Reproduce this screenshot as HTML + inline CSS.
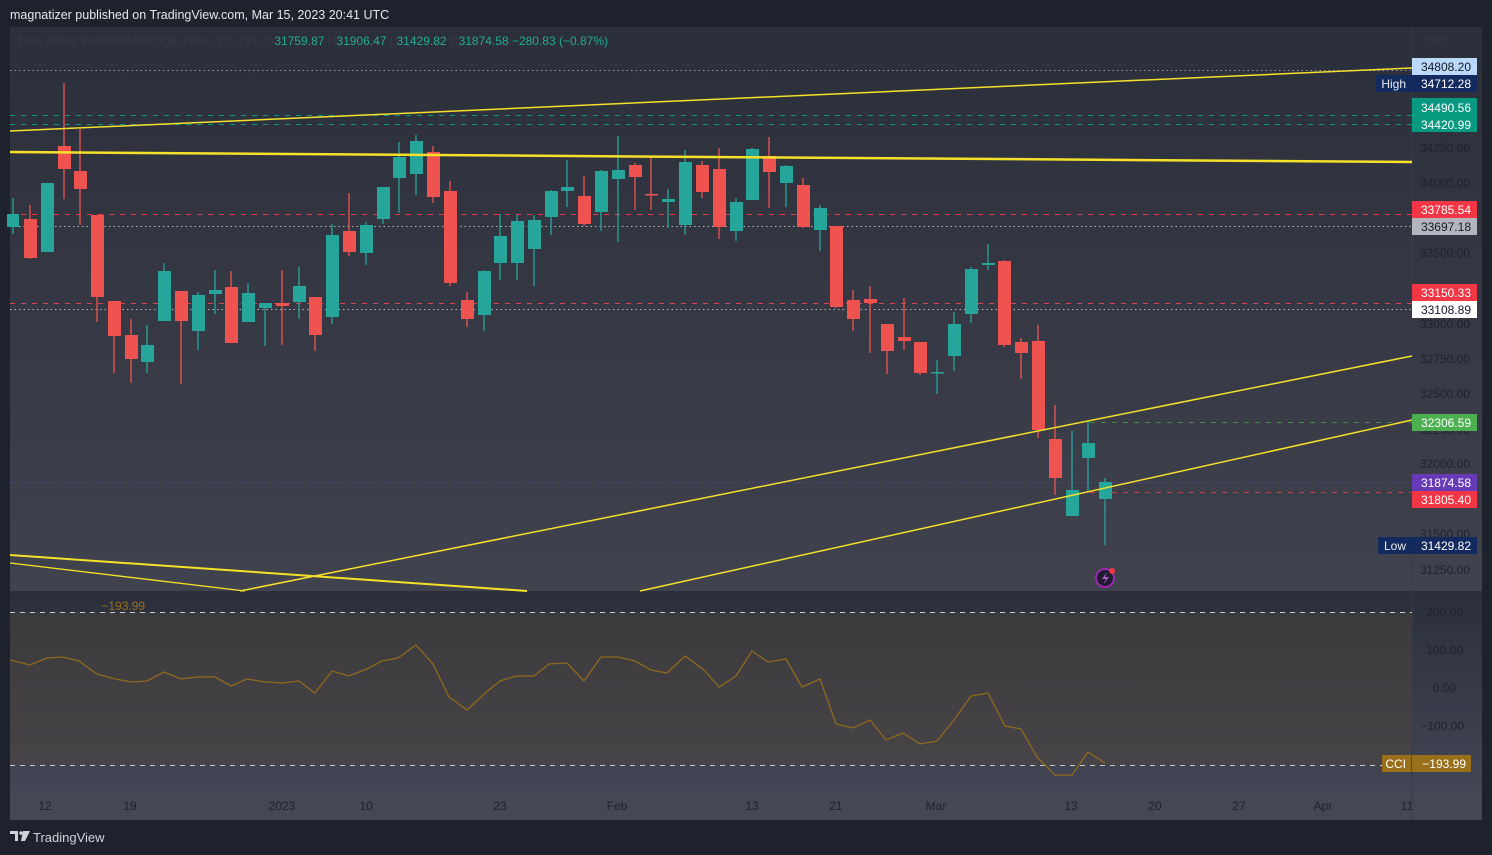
<!DOCTYPE html>
<html><head><meta charset="utf-8"><style>
html,body{margin:0;padding:0;background:#1e222d;width:1492px;height:855px;overflow:hidden;font-family:"Liberation Sans",sans-serif}
svg{display:block}
</style></head><body>
<svg width="1492" height="855" viewBox="0 0 1492 855" xmlns="http://www.w3.org/2000/svg" font-family="Liberation Sans, sans-serif">
<defs>
<linearGradient id="gp" x1="0" y1="0" x2="0" y2="1"><stop offset="0" stop-color="#2b2f3a"/><stop offset="1" stop-color="#40424e"/></linearGradient>
<linearGradient id="gc" x1="0" y1="0" x2="0" y2="1"><stop offset="0" stop-color="#2b2f3b"/><stop offset="1" stop-color="#434654"/></linearGradient>
<linearGradient id="gf" x1="0" y1="0" x2="0" y2="1"><stop offset="0" stop-color="#3b3a3c"/><stop offset="1" stop-color="#474448"/></linearGradient>
</defs>
<rect width="1492" height="855" fill="#1e222d"/>
<text x="10" y="19" font-size="12.5" fill="#e6e7ea">magnatizer published on TradingView.com, Mar 15, 2023 20:41 UTC</text>
<rect x="10" y="27" width="1472" height="564" fill="url(#gp)"/>
<rect x="10" y="591" width="1472" height="202" fill="url(#gc)"/>
<rect x="10" y="793" width="1472" height="27" fill="#444754"/>
<rect x="10" y="612" width="1402" height="153" fill="url(#gf)"/>
<line x1="1412" y1="27" x2="1412" y2="820" stroke="#3a3d49" stroke-width="1"/>
<text x="18" y="45" font-size="12" fill="#363a46">Dow Jones Industrial Average Index, 1D, TVC  O<tspan fill="#22ab94">31759.87</tspan>  H<tspan fill="#22ab94">31906.47</tspan>  L<tspan fill="#22ab94">31429.82</tspan>  C<tspan fill="#22ab94">31874.58  −280.83 (−0.87%)</tspan></text>
<text x="1423" y="45" font-size="11" fill="#363a46">USD</text>
<g stroke-width="1" fill="none">
<line x1="10" y1="70.5" x2="1412" y2="70.5" stroke="#9598a1" stroke-dasharray="1.5 3"/>
<line x1="10" y1="115.5" x2="1412" y2="115.5" stroke="#089981" stroke-dasharray="5 6"/>
<line x1="10" y1="124.5" x2="1412" y2="124.5" stroke="#089981" stroke-dasharray="5 6"/>
<line x1="10" y1="214.5" x2="1412" y2="214.5" stroke="#f23645" stroke-dasharray="5 6"/>
<line x1="10" y1="226.5" x2="1412" y2="226.5" stroke="#b2b5be" stroke-dasharray="1.5 3"/>
<line x1="10" y1="303.5" x2="1412" y2="303.5" stroke="#d9424f" stroke-dasharray="5 6"/>
<line x1="10" y1="309.5" x2="1412" y2="309.5" stroke="#b2b5be" stroke-dasharray="1.5 3"/>
<line x1="1090" y1="422.5" x2="1412" y2="422.5" stroke="#3f8a45" stroke-dasharray="5 6"/>
<line x1="10" y1="482.5" x2="1412" y2="482.5" stroke="#5a45a8" stroke-dasharray="1.5 3"/>
<line x1="1090" y1="492.5" x2="1412" y2="492.5" stroke="#c8404c" stroke-dasharray="5 6"/>
<line x1="10" y1="612.5" x2="1412" y2="612.5" stroke="#c8c9cc" stroke-dasharray="5 5"/>
<line x1="10" y1="765.5" x2="1412" y2="765.5" stroke="#c8c9cc" stroke-dasharray="5 5"/>
</g>
<g fill="#26a69a" stroke="#26a69a" stroke-width="1.3">
<line x1="13" y1="198" x2="13" y2="234"/><rect x="7" y="214" width="12" height="13" stroke="none"/>
<rect x="41" y="183" width="13" height="69" stroke="none"/>
<line x1="147" y1="325" x2="147" y2="373"/><rect x="141" y="345" width="13" height="17" stroke="none"/>
<line x1="164" y1="263" x2="164" y2="321"/><rect x="158" y="271" width="13" height="50" stroke="none"/>
<line x1="198" y1="292" x2="198" y2="350"/><rect x="192" y="295" width="13" height="36" stroke="none"/>
<line x1="215" y1="270" x2="215" y2="314"/><rect x="209" y="290" width="13" height="4" stroke="none"/>
<line x1="248" y1="283" x2="248" y2="322"/><rect x="242" y="293" width="13" height="29" stroke="none"/>
<line x1="265" y1="303" x2="265" y2="346"/><rect x="259" y="303" width="13" height="5" stroke="none"/>
<line x1="299" y1="267" x2="299" y2="319"/><rect x="293" y="286" width="13" height="16" stroke="none"/>
<line x1="332" y1="224" x2="332" y2="324"/><rect x="326" y="235" width="13" height="82" stroke="none"/>
<line x1="366" y1="222" x2="366" y2="265"/><rect x="360" y="225" width="13" height="28" stroke="none"/>
<line x1="383" y1="187" x2="383" y2="224"/><rect x="377" y="187" width="13" height="32" stroke="none"/>
<line x1="399" y1="142" x2="399" y2="213"/><rect x="393" y="157" width="13" height="21" stroke="none"/>
<line x1="416" y1="135" x2="416" y2="195"/><rect x="410" y="141" width="13" height="33" stroke="none"/>
<line x1="484" y1="270" x2="484" y2="331"/><rect x="478" y="271" width="13" height="44" stroke="none"/>
<line x1="500" y1="214" x2="500" y2="280"/><rect x="494" y="236" width="13" height="27" stroke="none"/>
<line x1="517" y1="215" x2="517" y2="280"/><rect x="511" y="221" width="13" height="42" stroke="none"/>
<line x1="534" y1="215" x2="534" y2="286"/><rect x="528" y="220" width="13" height="29" stroke="none"/>
<line x1="551" y1="190" x2="551" y2="235"/><rect x="545" y="191" width="13" height="26" stroke="none"/>
<line x1="567" y1="160" x2="567" y2="207"/><rect x="561" y="187" width="13" height="4" stroke="none"/>
<line x1="601" y1="170" x2="601" y2="231"/><rect x="595" y="171" width="13" height="41" stroke="none"/>
<line x1="618" y1="136" x2="618" y2="242"/><rect x="612" y="170" width="13" height="9" stroke="none"/>
<line x1="668" y1="189" x2="668" y2="228"/><rect x="662" y="199" width="13" height="3" stroke="none"/>
<line x1="685" y1="150" x2="685" y2="235"/><rect x="679" y="162" width="13" height="63" stroke="none"/>
<line x1="736" y1="198" x2="736" y2="241"/><rect x="730" y="202" width="13" height="29" stroke="none"/>
<line x1="752" y1="148" x2="752" y2="200"/><rect x="746" y="149" width="13" height="51" stroke="none"/>
<line x1="786" y1="165" x2="786" y2="207"/><rect x="780" y="166" width="13" height="17" stroke="none"/>
<line x1="820" y1="205" x2="820" y2="251"/><rect x="814" y="208" width="13" height="22" stroke="none"/>
<line x1="937" y1="360" x2="937" y2="394"/><rect x="931" y="372" width="13" height="1.5" stroke="none"/>
<line x1="954" y1="312" x2="954" y2="371"/><rect x="948" y="324" width="13" height="32" stroke="none"/>
<line x1="971" y1="267" x2="971" y2="323"/><rect x="965" y="269" width="13" height="45" stroke="none"/>
<line x1="988" y1="244" x2="988" y2="270"/><rect x="982" y="263" width="13" height="2" stroke="none"/>
<line x1="1072" y1="431" x2="1072" y2="516"/><rect x="1066" y="490" width="13" height="26" stroke="none"/>
<line x1="1088" y1="421" x2="1088" y2="492"/><rect x="1082" y="443" width="13" height="15" stroke="none"/>
<line x1="1105" y1="478" x2="1105" y2="545"/><rect x="1099" y="482" width="13" height="17" stroke="none"/>
</g>
<g fill="#ef5350" stroke="#ef5350" stroke-width="1.3">
<line x1="30" y1="205" x2="30" y2="259"/><rect x="24" y="219" width="13" height="39" stroke="none"/>
<line x1="64" y1="83" x2="64" y2="199"/><rect x="58" y="146" width="13" height="23" stroke="none"/>
<line x1="80" y1="129" x2="80" y2="225"/><rect x="74" y="171" width="13" height="18" stroke="none"/>
<line x1="97" y1="215" x2="97" y2="322"/><rect x="91" y="215" width="13" height="82" stroke="none"/>
<line x1="114" y1="301" x2="114" y2="373"/><rect x="108" y="301" width="13" height="35" stroke="none"/>
<line x1="131" y1="319" x2="131" y2="383"/><rect x="125" y="335" width="13" height="24" stroke="none"/>
<line x1="181" y1="291" x2="181" y2="384"/><rect x="175" y="291" width="13" height="30" stroke="none"/>
<line x1="231" y1="271" x2="231" y2="343"/><rect x="225" y="287" width="13" height="56" stroke="none"/>
<line x1="282" y1="270" x2="282" y2="345"/><rect x="276" y="303" width="13" height="3" stroke="none"/>
<line x1="315" y1="297" x2="315" y2="351"/><rect x="309" y="297" width="13" height="38" stroke="none"/>
<line x1="349" y1="193" x2="349" y2="256"/><rect x="343" y="231" width="13" height="21" stroke="none"/>
<line x1="433" y1="146" x2="433" y2="203"/><rect x="427" y="152" width="13" height="45" stroke="none"/>
<line x1="450" y1="181" x2="450" y2="286"/><rect x="444" y="191" width="13" height="92" stroke="none"/>
<line x1="467" y1="292" x2="467" y2="327"/><rect x="461" y="300" width="13" height="19" stroke="none"/>
<line x1="584" y1="176" x2="584" y2="226"/><rect x="578" y="196" width="13" height="28" stroke="none"/>
<line x1="635" y1="163" x2="635" y2="210"/><rect x="629" y="165" width="13" height="12" stroke="none"/>
<line x1="651" y1="157" x2="651" y2="210"/><rect x="645" y="194" width="13" height="1.5" stroke="none"/>
<line x1="702" y1="161" x2="702" y2="198"/><rect x="696" y="165" width="13" height="27" stroke="none"/>
<line x1="719" y1="148" x2="719" y2="239"/><rect x="713" y="169" width="13" height="58" stroke="none"/>
<line x1="769" y1="137" x2="769" y2="208"/><rect x="763" y="156" width="13" height="16" stroke="none"/>
<line x1="803" y1="178" x2="803" y2="228"/><rect x="797" y="185" width="13" height="42" stroke="none"/>
<line x1="836" y1="226" x2="836" y2="308"/><rect x="830" y="226" width="13" height="81" stroke="none"/>
<line x1="853" y1="290" x2="853" y2="331"/><rect x="847" y="300" width="13" height="19" stroke="none"/>
<line x1="870" y1="286" x2="870" y2="353"/><rect x="864" y="299" width="13" height="4" stroke="none"/>
<line x1="887" y1="324" x2="887" y2="374"/><rect x="881" y="324" width="13" height="27" stroke="none"/>
<line x1="904" y1="298" x2="904" y2="350"/><rect x="898" y="337" width="13" height="4" stroke="none"/>
<line x1="920" y1="342" x2="920" y2="375"/><rect x="914" y="342" width="13" height="31" stroke="none"/>
<line x1="1004" y1="260" x2="1004" y2="347"/><rect x="998" y="261" width="13" height="84" stroke="none"/>
<line x1="1021" y1="338" x2="1021" y2="379"/><rect x="1015" y="342" width="13" height="11" stroke="none"/>
<line x1="1038" y1="325" x2="1038" y2="438"/><rect x="1032" y="341" width="13" height="89" stroke="none"/>
<line x1="1055" y1="405" x2="1055" y2="495"/><rect x="1049" y="439" width="13" height="39" stroke="none"/>
</g>
<g stroke="#f5e12a" fill="none">
<line x1="10" y1="131" x2="1412" y2="68" stroke-width="1.5"/>
<line x1="10" y1="152" x2="1412" y2="162" stroke-width="2.5"/>
<line x1="240" y1="591" x2="1412" y2="356" stroke-width="1.5"/>
<line x1="640" y1="591" x2="1412" y2="420" stroke-width="1.5"/>
<line x1="10" y1="555" x2="527" y2="591" stroke-width="2"/>
<line x1="10" y1="563" x2="245" y2="591" stroke-width="1.3"/>
</g>
<circle cx="1105" cy="578" r="9" fill="#1e1b2e" stroke="#9c27b0" stroke-width="2"/>
<path d="M1107 572 L1102 579 L1106 579 L1103 585 L1109 577 L1105 577 Z" fill="#b45fd0"/>
<circle cx="1112" cy="571" r="3" fill="#f23645"/>
<polyline fill="none" stroke="#8f6a1c" stroke-width="1.3" points="10,660 30,665 47,658 63,657 79,661 97,674 115,679 132,682 147,681 164,672 181,679 197,677 215,677 231,686 247,679 265,682 283,683 299,681 315,693 332,671 349,676 367,669 382,661 398,658 416,645 433,664 449,697 467,710 484,694 500,681 516,676 534,676 549,664 567,663 584,681 601,657 618,657 635,661 651,670 667,673 685,656 704,670 719,687 736,676 752,651 768,662 786,659 802,687 820,679 836,724 853,728 870,720 886,740 903,733 920,744 937,741 954,720 971,696 988,693 1005,726 1021,729 1037,757 1055,775 1072,775 1088,752 1105,763"/>
<text x="18" y="610" font-size="12" fill="#30343f">CCI (55, close)  <tspan fill="#9a6f1a">−193.99</tspan></text>
<g font-size="12" fill="#1f222b" text-anchor="end">
<text x="1470" y="152">34250.00</text>
<text x="1470" y="187">34000.00</text>
<text x="1470" y="257">33500.00</text>
<text x="1470" y="328">33000.00</text>
<text x="1470" y="363">32750.00</text>
<text x="1470" y="398">32500.00</text>
<text x="1470" y="434">32250.00</text>
<text x="1470" y="468">32000.00</text>
<text x="1470" y="538">31500.00</text>
<text x="1470" y="574">31250.00</text>
<text x="1463" y="616">200.00</text>
<text x="1463" y="654">100.00</text>
<text x="1456" y="692">0.00</text>
<text x="1464" y="730">−100.00</text>
</g>
<g font-size="12" text-anchor="end">
<rect x="1412" y="58" width="65" height="17" fill="#bbd9fb"/><text x="1471" y="71" fill="#131722">34808.20</text>
<rect x="1376" y="75" width="101" height="17" fill="#132a5e"/><text x="1406" y="88" fill="#e8eaf0">High</text><text x="1471" y="88" fill="#fff">34712.28</text>
<rect x="1412" y="98" width="65" height="34" fill="#089981"/><text x="1471" y="112" fill="#fff">34490.56</text><text x="1471" y="129" fill="#fff">34420.99</text>
<rect x="1412" y="201" width="65" height="17" fill="#f23645"/><text x="1471" y="214" fill="#fff">33785.54</text>
<rect x="1412" y="218" width="65" height="17" fill="#b2b5be"/><text x="1471" y="231" fill="#131722">33697.18</text>
<rect x="1412" y="284" width="65" height="17" fill="#f23645"/><text x="1471" y="297" fill="#fff">33150.33</text>
<rect x="1412" y="301" width="65" height="17" fill="#ffffff"/><text x="1471" y="314" fill="#131722">33108.89</text>
<rect x="1412" y="414" width="65" height="17" fill="#4caf50"/><text x="1471" y="427" fill="#fff">32306.59</text>
<rect x="1412" y="474" width="65" height="17" fill="#673ab7"/><text x="1471" y="487" fill="#fff">31874.58</text>
<rect x="1412" y="491" width="65" height="17" fill="#f23645"/><text x="1471" y="504" fill="#fff">31805.40</text>
<rect x="1378" y="537" width="99" height="17" fill="#132a5e"/><text x="1406" y="550" fill="#e8eaf0">Low</text><text x="1471" y="550" fill="#fff">31429.82</text>
<rect x="1382" y="755" width="89" height="17" fill="#9a6f1a"/><line x1="1411.5" y1="755" x2="1411.5" y2="772" stroke="#444754"/><text x="1406" y="768" fill="#fff">CCI</text><text x="1466" y="768" fill="#fff">−193.99</text>
</g>
<g font-size="12" fill="#1f222b" text-anchor="middle">
<text x="45" y="810">12</text><text x="130" y="810">19</text><text x="282" y="810">2023</text><text x="366" y="810">10</text><text x="500" y="810">23</text><text x="617" y="810">Feb</text><text x="752" y="810">13</text><text x="836" y="810">21</text><text x="936" y="810">Mar</text><text x="1071" y="810">13</text><text x="1155" y="810">20</text><text x="1239" y="810">27</text><text x="1323" y="810">Apr</text><text x="1407" y="810">11</text>
</g>
<g fill="#d1d4dc">
<path d="M10 831 h8 v10 h-3 v-7 h-5 z"/><circle cx="21" cy="833" r="1.8"/><path d="M23 831 h7 l-5 10 h-4 z"/>
</g>
<text x="33" y="842" font-size="13" fill="#d1d4dc">TradingView</text>
</svg>
</body></html>
